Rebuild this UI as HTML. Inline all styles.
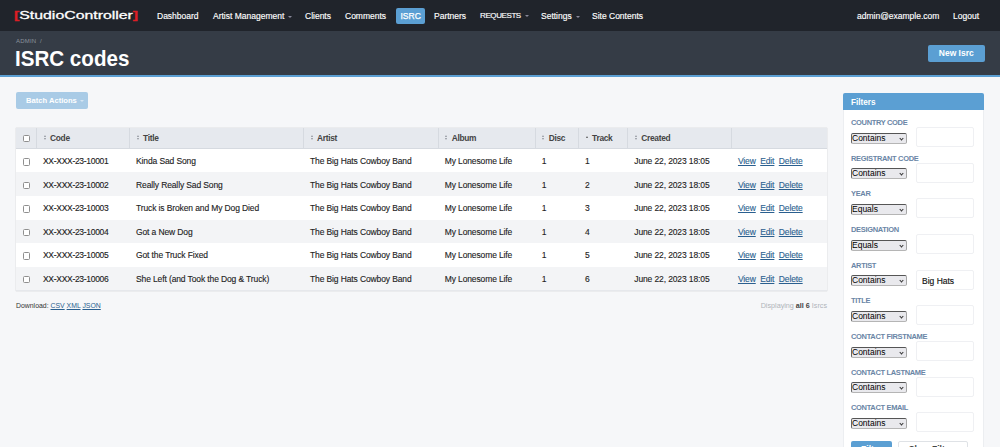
<!DOCTYPE html>
<html><head><meta charset="utf-8"><title>ISRC codes</title>
<style>
*{box-sizing:border-box}
html,body{margin:0;padding:0}
body{width:1000px;height:447px;overflow:hidden;background:#f6f7f9;font-family:"Liberation Sans",sans-serif;font-size:9px;color:#333;position:relative}
#header{position:absolute;left:0;top:0;width:1000px;height:31px;background:#20242b;color:#fff}
#logo{position:absolute;left:14px;top:8px;font-size:11.5px;font-weight:normal;letter-spacing:0;color:#fff;line-height:14px;transform-origin:0 50%;transform:scaleX(1.377);white-space:nowrap;-webkit-text-stroke:.3px #fff}
#logo i{-webkit-text-stroke:.3px #d8232a}
#logo i{font-style:normal;color:#e01b22;font-weight:bold}
#header a{-webkit-text-stroke:.15px #fff;position:absolute;top:8px;height:16px;line-height:16px;font-size:8.5px;color:#fff;text-decoration:none;white-space:nowrap}
#header a.cur{background:#5b9fd3;border-radius:2px;padding:0 4.5px;top:7.5px;-webkit-text-stroke:.25px #fff}
.arr{display:inline-block;width:0;height:0;border-left:2px solid transparent;border-right:2px solid transparent;border-top:2px solid #889;margin-left:4px;vertical-align:middle}
#titlebar{position:absolute;left:0;top:31px;width:1000px;height:46px;background:#353c46;border-bottom:2px solid #5b9fd3}
#crumb{position:absolute;left:16px;top:6.5px;font-size:6px;color:#8a929c;letter-spacing:.2px}
#ptitle{position:absolute;left:15px;top:14px;font-size:21.5px;transform-origin:0 50%;transform:scaleX(.957);font-weight:bold;color:#fff;line-height:28px;white-space:nowrap}
#newbtn{position:absolute;left:928px;top:14px;width:56.5px;height:17px;background:#5b9fd3;border-radius:2px;color:#fff;font-weight:bold;font-size:8.5px;text-align:center;line-height:17px}
#batch{position:absolute;left:16px;top:92px;width:72px;height:17px;background:#a9cbe6;border-radius:2px;color:#fff;font-weight:bold;font-size:7.6px;text-align:left;padding-left:10px;line-height:17px}
table{position:absolute;left:16px;top:128px;width:810.5px;border-collapse:collapse;table-layout:fixed;background:#fff;box-shadow:0 0 1px rgba(0,0,0,.25);border-bottom:1px solid #e6e8ec}
th{height:20.7px;background:#e6e9ee;text-align:left;font-size:8.4px;font-weight:bold;color:#444;padding:0 0 1px 6.5px;letter-spacing:-.3px;border-right:1px solid #d6dae0;border-bottom:1px solid #d6dae0;white-space:nowrap}
th:last-child{border-right:0}
th .s{display:inline-block;width:3px;height:5px;margin-right:3.5px;vertical-align:middle;position:relative;top:-.5px}
th .s:before,th .s:after{content:"";position:absolute;left:0;border-left:1.5px solid transparent;border-right:1.5px solid transparent}
th .s:before{top:0;border-bottom:2px solid #8e939b}
th .s:after{bottom:0;border-top:2px solid #8e939b}
th .s.up:after{display:none}
th .s.up:before{top:1px;border-bottom-color:#555}
td{-webkit-text-stroke:.12px #222;height:23.65px;font-size:8.5px;color:#222;padding:.8px 0 0 6.5px;letter-spacing:-.12px;white-space:nowrap;overflow:hidden}
tr.e td{background:#f3f4f6}
td a{-webkit-text-stroke:.12px #2a5f8f;color:#2a5f8f;text-decoration:underline;margin-right:2.2px}
td.c{letter-spacing:-.3px}
.cb{display:inline-block;width:7.5px;height:7.5px;border:1px solid #8f8f8f;border-radius:1.5px;background:#fff;vertical-align:middle}
#dl{position:absolute;left:16px;top:301.5px;font-size:6.9px;color:#333}
#dl a{color:#2a5f8f;text-decoration:underline}
#disp{position:absolute;right:173px;top:301px;font-size:7.2px;color:#b0b4ba}
#disp b{color:#444}
#side{position:absolute;left:843px;top:93px;width:141px;height:360px;background:#fff;border:1px solid #eceef1;border-radius:2px}
#side h3{margin:-1px -1px 0 -1px;height:17px;background:#5b9fd3;color:#fff;font-size:8.2px;font-weight:bold;line-height:19px;padding-left:8px;overflow:hidden;border-radius:2px 2px 0 0}
.f{position:absolute;left:7px;width:130px;height:36px}
.f label{position:absolute;left:0;top:-1px;font-size:7.5px;font-weight:bold;color:#6a86a6;letter-spacing:-.34px;white-space:nowrap}
.f .sel{position:absolute;left:0;top:13.5px;width:56px;height:11px;background:#e9e9ed;border:1px solid #8a8a8a;border-top-color:#555;border-left-color:#666;border-bottom-color:#b5b5b5;border-right-color:#a5a5a5;border-radius:2px;font-size:8.5px;line-height:9px;color:#000;padding-left:0;white-space:nowrap}
.f .sel:after{content:"";position:absolute;right:3px;top:3px;width:2px;height:2px;border-right:.8px solid #333;border-bottom:.8px solid #333;transform:rotate(45deg)}
.f .inp{position:absolute;left:65px;top:8px;width:58px;height:20px;border:1px solid #eff0f3;border-radius:2px;background:#fff;font-size:8.5px;line-height:20px;padding-left:5px;color:#111;-webkit-text-stroke:.15px #111}
#fb{position:absolute;left:851px;top:441px;width:41px;height:17px;background:#5b9fd3;border-radius:2px;color:#fff;font-weight:bold;font-size:8.5px;text-align:center;line-height:17px}
#cb{position:absolute;left:898px;top:441px;width:70px;height:17px;background:#fff;border:1px solid #dfe2e6;border-radius:2px;color:#444;font-weight:bold;font-size:8.5px;text-align:center;line-height:15px}
</style></head><body>
<div id="header">
<div id="logo"><i>[</i>StudioController<i>]</i></div>
<a style="left:157px">Dashboard</a>
<a style="left:213px">Artist Management<span class="arr"></span></a>
<a style="left:305px">Clients</a>
<a style="left:345px">Comments</a>
<a class="cur" style="left:396px">ISRC</a>
<a style="left:434px">Partners</a>
<a style="left:480px;font-size:8px;letter-spacing:-.4px">REQUESTS<span class="arr"></span></a>
<a style="left:541px">Settings<span class="arr"></span></a>
<a style="left:592px">Site Contents</a>
<a style="left:857px">admin@example.com</a>
<a style="left:953px">Logout</a>
</div>
<div id="titlebar">
<div id="crumb">ADMIN&nbsp;&nbsp;/</div>
<div id="ptitle">ISRC codes</div>
<div id="newbtn">New Isrc</div>
</div>
<div id="batch">Batch Actions<span class="arr" style="border-top-color:#d4e5f3;margin-left:3px"></span></div>
<table>
<colgroup><col style="width:20.5px"><col style="width:93px"><col style="width:174px"><col style="width:134.7px"><col style="width:97px"><col style="width:43.4px"><col style="width:49.2px"><col style="width:103.7px"><col></colgroup>
<tr><th><span class="cb"></span></th><th><span class="s"></span>Code</th><th><span class="s"></span>Title</th><th><span class="s"></span>Artist</th><th><span class="s"></span>Album</th><th><span class="s"></span>Disc</th><th><span class="s up"></span>Track</th><th><span class="s"></span>Created</th><th></th></tr>
<tr><td><span class="cb"></span></td><td class="c">XX-XXX-23-10001</td><td>Kinda Sad Song</td><td>The Big Hats Cowboy Band</td><td>My Lonesome Life</td><td>1</td><td>1</td><td>June 22, 2023 18:05</td><td><a>View</a> <a>Edit</a> <a>Delete</a></td></tr>
<tr class="e"><td><span class="cb"></span></td><td class="c">XX-XXX-23-10002</td><td>Really Really Sad Song</td><td>The Big Hats Cowboy Band</td><td>My Lonesome Life</td><td>1</td><td>2</td><td>June 22, 2023 18:05</td><td><a>View</a> <a>Edit</a> <a>Delete</a></td></tr>
<tr><td><span class="cb"></span></td><td class="c">XX-XXX-23-10003</td><td>Truck is Broken and My Dog Died</td><td>The Big Hats Cowboy Band</td><td>My Lonesome Life</td><td>1</td><td>3</td><td>June 22, 2023 18:05</td><td><a>View</a> <a>Edit</a> <a>Delete</a></td></tr>
<tr class="e"><td><span class="cb"></span></td><td class="c">XX-XXX-23-10004</td><td>Got a New Dog</td><td>The Big Hats Cowboy Band</td><td>My Lonesome Life</td><td>1</td><td>4</td><td>June 22, 2023 18:05</td><td><a>View</a> <a>Edit</a> <a>Delete</a></td></tr>
<tr><td><span class="cb"></span></td><td class="c">XX-XXX-23-10005</td><td>Got the Truck Fixed</td><td>The Big Hats Cowboy Band</td><td>My Lonesome Life</td><td>1</td><td>5</td><td>June 22, 2023 18:05</td><td><a>View</a> <a>Edit</a> <a>Delete</a></td></tr>
<tr class="e"><td><span class="cb"></span></td><td class="c">XX-XXX-23-10006</td><td>She Left (and Took the Dog &amp; Truck)</td><td>The Big Hats Cowboy Band</td><td>My Lonesome Life</td><td>1</td><td>6</td><td>June 22, 2023 18:05</td><td><a>View</a> <a>Edit</a> <a>Delete</a></td></tr>
</table>
<div id="dl">Download: <a>CSV</a> <a>XML</a> <a>JSON</a></div>
<div id="disp">Displaying <b>all 6</b> Isrcs</div>
<div id="side"><h3>Filters</h3>
<div class="f" style="top:25.00px"><label>COUNTRY CODE</label><div class="sel">Contains</div><div class="inp"></div></div>
<div class="f" style="top:60.67px"><label>REGISTRANT CODE</label><div class="sel">Contains</div><div class="inp"></div></div>
<div class="f" style="top:96.34px"><label>YEAR</label><div class="sel">Equals</div><div class="inp"></div></div>
<div class="f" style="top:132.01px"><label>DESIGNATION</label><div class="sel">Equals</div><div class="inp"></div></div>
<div class="f" style="top:167.68px"><label>ARTIST</label><div class="sel">Contains</div><div class="inp">Big Hats</div></div>
<div class="f" style="top:203.35px"><label>TITLE</label><div class="sel">Contains</div><div class="inp"></div></div>
<div class="f" style="top:239.02px"><label>CONTACT FIRSTNAME</label><div class="sel">Contains</div><div class="inp"></div></div>
<div class="f" style="top:274.69px"><label>CONTACT LASTNAME</label><div class="sel">Contains</div><div class="inp"></div></div>
<div class="f" style="top:310.36px"><label>CONTACT EMAIL</label><div class="sel">Contains</div><div class="inp"></div></div>
</div>
<div id="fb">Filter</div><div id="cb">Clear Filters</div>
</body></html>
